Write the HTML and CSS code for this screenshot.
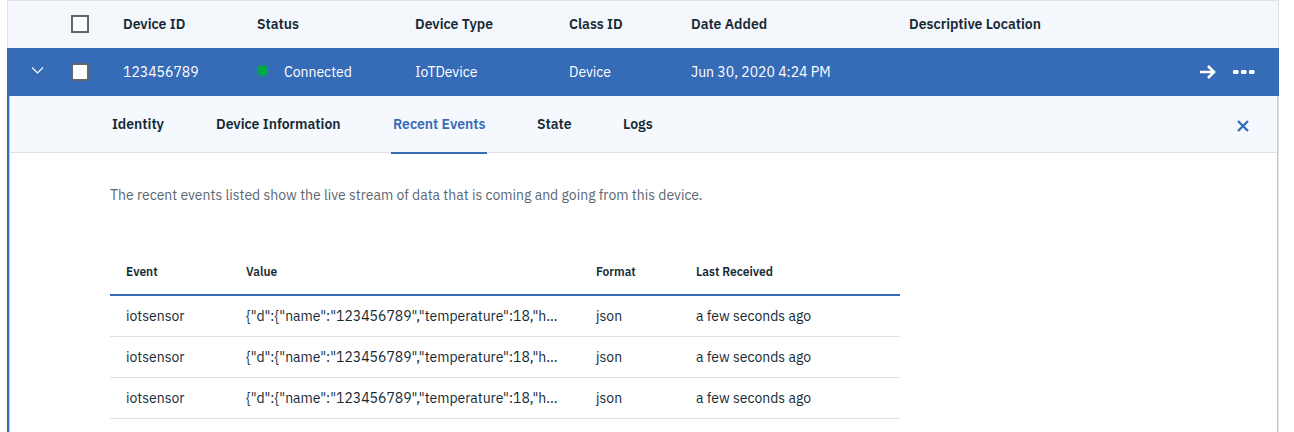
FILE: index.html
```html
<!DOCTYPE html>
<html lang="en">
<head>
<meta charset="utf-8">
<title>Devices</title>
<link rel="stylesheet" href="styles.css">
</head>
<body>
<table class="devices">
  <colgroup>
    <col class="col-expand"><col class="col-check"><col class="col-id"><col class="col-status"><col class="col-type"><col class="col-class"><col class="col-date"><col><col class="col-actions">
  </colgroup>
  <thead>
    <tr class="head-row">
      <th></th>
      <th><input type="checkbox" class="check" aria-label="Select all devices"></th>
      <th>Device ID</th>
      <th>Status</th>
      <th>Device Type</th>
      <th>Class ID</th>
      <th>Date Added</th>
      <th>Descriptive Location</th>
      <th></th>
    </tr>
  </thead>
  <tbody>
    <tr class="device-row">
      <td class="expand-cell"><button class="icon-button" aria-label="Collapse" aria-expanded="true"><svg width="13" height="8" viewBox="0 0 13 8" fill="none" stroke="currentColor" stroke-width="1.100"><path d="M1 1.500 6.500 7 12 1.500"/></svg></button></td>
      <td><input type="checkbox" class="check" aria-label="Select device 123456789"></td>
      <td>123456789</td>
      <td><span class="status"><span class="dot"></span>Connected</span></td>
      <td>IoTDevice</td>
      <td>Device</td>
      <td>Jun 30, 2020 4:24 PM</td>
      <td></td>
      <td>
        <div class="actions">
          <button class="icon-button" aria-label="Open device"><svg width="18" height="14" viewBox="0 0 18 14" fill="none" stroke="currentColor" stroke-width="2.700"><path d="M1 7h14.500M9 1l6 6-6 6"/></svg></button>
          <button class="icon-button" aria-label="More actions"><svg width="22" height="4" viewBox="0 0 22 4" fill="currentColor"><rect width="5.500" height="4" rx="1.200"/><rect x="8" width="5.500" height="4" rx="1.200"/><rect x="16" width="5.500" height="4" rx="1.200"/></svg></button>
        </div>
      </td>
    </tr>
    <tr>
      <td class="detail-cell" colspan="9">
        <div class="detail">
          <div class="tab-bar">
            <div class="tabs" role="tablist">
              <button class="tab" role="tab" aria-selected="false">Identity</button>
              <button class="tab" role="tab" aria-selected="false">Device Information</button>
              <button class="tab tab-active" role="tab" aria-selected="true">Recent Events</button>
              <button class="tab" role="tab" aria-selected="false">State</button>
              <button class="tab" role="tab" aria-selected="false">Logs</button>
            </div>
            <button class="icon-button close" aria-label="Close details"><svg width="12" height="12" viewBox="0 0 12 12" fill="none" stroke="currentColor" stroke-width="2.300"><path d="M1 1l10 10M11 1 1 11"/></svg></button>
          </div>
          <div class="events-panel" role="tabpanel">
            <p class="intro">The recent events listed show the live stream of data that is coming and going from this device.</p>
            <table class="events">
              <colgroup><col class="col-event"><col class="col-value"><col class="col-format"><col></colgroup>
              <thead><tr><th>Event</th><th>Value</th><th>Format</th><th>Last Received</th></tr></thead>
              <tbody>
                <tr><td>iotsensor</td><td>{"d":{"name":"123456789","temperature":18,"h...</td><td>json</td><td>a few seconds ago</td></tr>
                <tr><td>iotsensor</td><td>{"d":{"name":"123456789","temperature":18,"h...</td><td>json</td><td>a few seconds ago</td></tr>
                <tr><td>iotsensor</td><td>{"d":{"name":"123456789","temperature":18,"h...</td><td>json</td><td>a few seconds ago</td></tr>
              </tbody>
            </table>
          </div>
        </div>
      </td>
    </tr>
  </tbody>
</table>
</body>
</html>
```
FILE: styles.css
```css
* { box-sizing: border-box; }

body {
  margin: 0;
  padding: 0 15px 0 7px;
  background: #fff;
  color: #152935;
  font: 14px/20px "IBM Plex Sans", Roboto, "Liberation Sans", sans-serif;
}

table {
  width: 100%;
  table-layout: fixed;
  border-collapse: separate;
  border-spacing: 0;
}

th, td {
  padding: 0;
  text-align: left;
  vertical-align: middle;
  white-space: nowrap;
}

.col-expand, .col-check { width: 52px; }
.col-id { width: 134px; }
.col-status { width: 158px; }
.col-type { width: 154px; }
.col-class { width: 122px; }
.col-date { width: 218px; }
.col-actions { width: 92px; }

.head-row th {
  height: 48px;
  padding: 0 0 1px 12px;
  background: #f4f7fb;
  border-top: 1px solid #dfe3e6;
  font-weight: 600;
}
.head-row th:first-child { border-left: 1px solid #dfe3e6; }
.head-row th:last-child { border-right: 1px solid #dfe3e6; }

.device-row td {
  height: 48px;
  padding-left: 12px;
  background: #366bb8;
  color: #fff;
}
.device-row .expand-cell { padding: 0 0 4px 24px; }

.check {
  display: block;
  appearance: none;
  width: 18px;
  height: 18px;
  margin: 0;
  border: 2px solid #5a6872;
  background: #fff;
}

.icon-button {
  display: block;
  padding: 0;
  border: 0;
  background: none;
  color: inherit;
}
.icon-button svg { display: block; }

.status {
  display: flex;
  align-items: center;
  gap: 16px;
}
.dot {
  width: 11px;
  height: 11px;
  margin-bottom: 3px;
  border-radius: 50%;
  background: #00aa46;
}

.actions {
  display: flex;
  align-items: center;
  justify-content: flex-end;
  gap: 16px;
  padding-right: 24px;
}

.detail-cell {
  border-left: 2px solid #366bb8;
  border-right: 1px solid #dfe3e6;
}
.detail {
  min-height: calc(100vh - 96px);
  border: solid #c5cbd1;
  border-width: 0 1px;
}

.tab-bar {
  display: flex;
  align-items: center;
  justify-content: space-between;
  height: 57px;
  padding: 0 28px 0 100px;
  border-bottom: 1px solid #dfe3e6;
  background: #f5f8fd;
}
.tabs {
  display: grid;
  grid-template-columns: 56px 129px 96px 38px auto;
  column-gap: 48px;
  align-self: stretch;
  margin-bottom: -2px;
}
.tab {
  padding: 0 2px;
  border: 0;
  border-bottom: 2px solid transparent;
  background: none;
  color: inherit;
  font: inherit;
  font-weight: 600;
  text-align: left;
  white-space: nowrap;
}
.tab-active {
  border-bottom-color: #366bb8;
  color: #366bb8;
}
.close {
  padding-top: 4px;
  color: #366bb8;
}

.events-panel { padding: 32px 100px 0; }
.intro {
  margin: 0 0 43px;
  color: #5a6872;
}

.events { max-width: 790px; }
.col-event { width: 120px; }
.col-value { width: 350px; }
.col-format { width: 100px; }
.events th {
  height: 48px;
  padding: 2px 0 0 16px;
  border-bottom: 2px solid #366bb8;
  font-size: 12px;
  font-weight: 600;
}
.events td {
  height: 41px;
  padding-left: 16px;
  border-bottom: 1px solid #dfe3e6;
}
```
